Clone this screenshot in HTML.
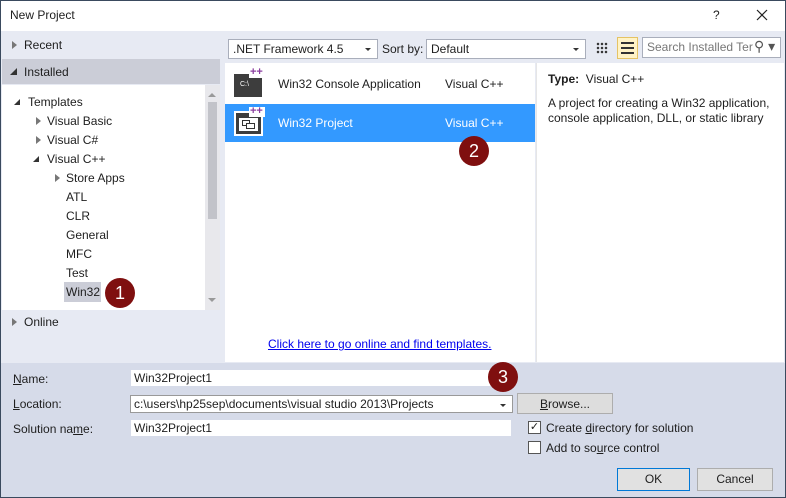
<!DOCTYPE html><html><head><style>
*{margin:0;padding:0;box-sizing:border-box}
body{width:786px;height:498px;overflow:hidden;font-family:"Liberation Sans",sans-serif;font-size:12px;color:#1e1e1e;position:relative;background:#e7eaf3}
.a{position:absolute;white-space:nowrap}
.badge{position:absolute;width:30px;height:30px;border-radius:50%;background:#7f0f0f;color:#fff;font-size:18px;text-align:center;line-height:30px}
.tri{position:absolute;width:0;height:0}
.tr{border-left:5px solid #777;border-top:4px solid transparent;border-bottom:4px solid transparent}
.td{border-right:7px solid #333;border-top:7px solid transparent}
.box{position:absolute;background:#fff;border:1px solid #a9aebb;height:20px;padding:2px 4px;font-size:12px}
.dd::after{content:"";position:absolute;right:6px;top:8px;border-left:3px solid transparent;border-right:3px solid transparent;border-top:3px solid #333}
.btn{position:absolute;background:#ddd;border:1px solid #adadad;text-align:center;line-height:20px;font-size:12px}
</style></head><body>
<div class="a" style="left:0;top:0;width:786px;height:498px;border:1px solid #3a4a5e"></div>
<div class="a" style="left:1px;top:1px;width:784px;height:30px;background:#fff"></div>
<div class="a" style="left:10px;top:8px;font-size:12px">New Project</div>
<div class="a" style="left:713px;top:8px;font-size:12px">?</div>
<svg class="a" style="left:756px;top:9px" width="12" height="12"><path d="M1 1L11 11M11 1L1 11" stroke="#222" stroke-width="1.2"/></svg>
<!-- left -->
<div class="tri tr" style="left:12px;top:41px"></div><div class="a" style="left:24px;top:38px">Recent</div>
<div class="a" style="left:2px;top:59px;width:218px;height:25px;background:#cbcdd7"></div>
<div class="tri td" style="left:10px;top:68px"></div><div class="a" style="left:24px;top:65px">Installed</div>
<div class="a" style="left:2px;top:85px;width:203px;height:225px;background:#fff"></div>
<div class="a" style="left:205px;top:85px;width:15px;height:225px;background:#e8e8ec"></div>
<div class="a" style="left:208px;top:102px;width:9px;height:117px;background:#c2c3c9"></div>
<div class="tri" style="left:208px;top:93px;border-left:4px solid transparent;border-right:4px solid transparent;border-bottom:4px solid #999"></div>
<div class="tri" style="left:208px;top:298px;border-left:4px solid transparent;border-right:4px solid transparent;border-top:4px solid #999"></div>
<div class="tri td" style="left:14px;top:99px;border-right-width:6px;border-top-width:6px"></div><div class="a" style="left:28px;top:95px">Templates</div>
<div class="tri tr" style="left:36px;top:117px"></div><div class="a" style="left:47px;top:114px">Visual Basic</div>
<div class="tri tr" style="left:36px;top:136px"></div><div class="a" style="left:47px;top:133px">Visual C#</div>
<div class="tri td" style="left:33px;top:156px;border-right-width:6px;border-top-width:6px"></div><div class="a" style="left:47px;top:152px">Visual C++</div>
<div class="tri tr" style="left:55px;top:174px"></div><div class="a" style="left:66px;top:171px">Store Apps</div>
<div class="a" style="left:66px;top:190px">ATL</div>
<div class="a" style="left:66px;top:209px">CLR</div>
<div class="a" style="left:66px;top:228px">General</div>
<div class="a" style="left:66px;top:247px">MFC</div>
<div class="a" style="left:66px;top:266px">Test</div>
<div class="a" style="left:64px;top:282px;width:37px;height:20px;background:#cbcdd7"></div>
<div class="a" style="left:66px;top:285px">Win32</div>
<div class="badge" style="left:105px;top:278px">1</div>
<div class="tri tr" style="left:12px;top:318px"></div><div class="a" style="left:24px;top:315px">Online</div>
<!-- toolbar -->
<div class="box dd" style="left:228px;top:39px;width:150px">.NET Framework 4.5</div>
<div class="a" style="left:382px;top:42px">Sort by:</div>
<div class="box dd" style="left:426px;top:39px;width:160px">Default</div>
<div class="a" style="left:596px;top:42px;width:12px;height:12px;background:radial-gradient(circle,#333 1px,transparent 1.5px) 0 0/4px 4px"></div>
<div class="a" style="left:617px;top:37px;width:21px;height:22px;background:#fff3c6;border:1px solid #e5c365"></div>
<div class="a" style="left:621px;top:42px;width:13px;height:12px;background:repeating-linear-gradient(#333 0 2px,transparent 2px 5px)"></div>
<div class="box" style="left:642px;top:37px;width:139px;height:21px;color:#777;overflow:hidden">Search Installed Ter</div>
<div class="a" style="left:754px;top:38px;font-size:14px;color:#555;background:#fff">⚲ ▾</div>
<!-- middle -->
<div class="a" style="left:225px;top:63px;width:310px;height:299px;background:#fff"></div>
<div class="a" style="left:234px;top:74px;width:28px;height:23px;background:#3d3d3d"></div>
<div class="a" style="left:240px;top:81px;color:#fff;font-size:7px">C:\</div>
<div class="a" style="left:249px;top:68px;width:15px;height:10px;background:#fff"></div>
<div class="a" style="left:250px;top:66px;color:#8b3fa0;font-size:11px;font-weight:bold">++</div>
<div class="a" style="left:278px;top:77px">Win32 Console Application</div>
<div class="a" style="left:445px;top:77px">Visual C++</div>
<div class="a" style="left:225px;top:104px;width:310px;height:38px;background:#3399ff"></div>
<div class="a" style="left:234px;top:111px;width:29px;height:25px;background:#3d3d3d;border:2px solid #fff"></div>
<div class="a" style="left:239px;top:118px;width:19px;height:13px;background:#fff"></div>
<div class="a" style="left:242px;top:120px;width:8px;height:6px;border:1px solid #333"></div>
<div class="a" style="left:246px;top:123px;width:9px;height:6px;border:1px solid #333;background:#fff"></div>
<div class="a" style="left:249px;top:107px;width:16px;height:10px;background:#fff"></div>
<div class="a" style="left:250px;top:105px;color:#8b3fa0;font-size:11px;font-weight:bold">++</div>
<div class="a" style="left:278px;top:116px;color:#fff">Win32 Project</div>
<div class="a" style="left:445px;top:116px;color:#fff">Visual C++</div>
<div class="badge" style="left:459px;top:136px">2</div>
<div class="a" style="left:268px;top:337px;color:#0000ee;text-decoration:underline">Click here to go online and find templates.</div>
<!-- right -->
<div class="a" style="left:536px;top:63px;width:248px;height:299px;background:#fff;border-left:1px solid #e6e6e6"></div>
<div class="a" style="left:548px;top:72px"><b>Type:</b>&nbsp; Visual C++</div>
<div class="a" style="left:548px;top:96px;line-height:15px">A project for creating a Win32 application,<br>console application, DLL, or static library</div>
<!-- bottom -->
<div class="a" style="left:1px;top:363px;width:784px;height:134px;background:#d6dbe9"></div>
<div class="a" style="left:13px;top:372px"><u>N</u>ame:</div>
<div class="a" style="left:13px;top:397px"><u>L</u>ocation:</div>
<div class="a" style="left:13px;top:422px">Solution na<u>m</u>e:</div>
<div class="a" style="left:131px;top:370px;width:380px;height:16px;background:#fff;padding:1px 3px">Win32Project1</div>
<div class="badge" style="left:488px;top:362px">3</div>
<div class="box dd" style="left:130px;top:395px;width:383px;height:18px;padding:1px 3px;border-color:#999">c:\users\hp25sep\documents\visual studio 2013\Projects</div>
<div class="a" style="left:131px;top:420px;width:380px;height:16px;background:#fff;padding:1px 3px">Win32Project1</div>
<div class="btn" style="left:517px;top:393px;width:96px;height:21px"><u>B</u>rowse...</div>
<div class="a" style="left:528px;top:421px;width:13px;height:13px;background:#fff;border:1px solid #555;font-size:11px;line-height:11px;text-align:center">✓</div>
<div class="a" style="left:546px;top:421px">Create <u>d</u>irectory for solution</div>
<div class="a" style="left:528px;top:441px;width:13px;height:13px;background:#fff;border:1px solid #555"></div>
<div class="a" style="left:546px;top:441px">Add to so<u>u</u>rce control</div>
<div class="btn" style="left:617px;top:468px;width:73px;height:23px;border:1px solid #0078d7;background:#e1e1e1;line-height:21px">OK</div>
<div class="btn" style="left:697px;top:468px;width:76px;height:23px;background:#e1e1e1;line-height:21px">Cancel</div>
</body></html>
